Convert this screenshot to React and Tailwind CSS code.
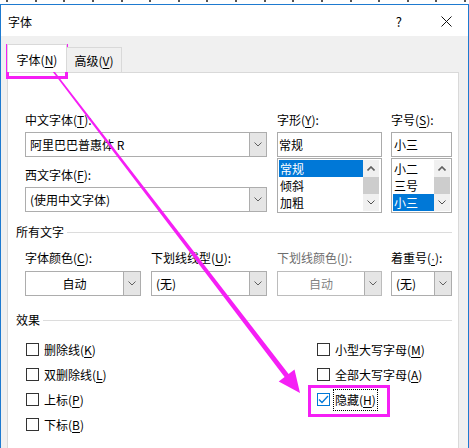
import React from "react";

const FONT = { fontFamily: '"Noto Sans CJK SC", "Noto Sans", sans-serif' };
const PINK = "#f51ff5";

function Key({ children }) {
  return <span className="underline underline-offset-2">{children}</span>;
}

function Chevron({ up = false, color = "#606060" }) {
  return (
    <svg width="8" height="5" viewBox="0 0 8 5">
      <path
        d={up ? "M0.5 4.5 L4 1 L7.5 4.5" : "M0.5 0.5 L4 4 L7.5 0.5"}
        fill="none"
        stroke={color}
        strokeWidth={up ? 1.6 : 1}
      />
    </svg>
  );
}

function Label({ children, disabled }) {
  return (
    <div
      className={`h-[16px] text-[12px] leading-[16px] ${
        disabled ? "text-[#6d6d6d]" : "text-black"
      }`}
    >
      {children}
    </div>
  );
}

function Combo({ value, width, center, disabled }) {
  return (
    <div
      className={`flex h-[25px] border bg-white ${
        disabled ? "border-[#bcbcbc]" : "border-[#adadad]"
      }`}
      style={{ width }}
    >
      <div
        className={`flex flex-1 items-center text-[12px] ${
          center ? "justify-center" : "pl-[4px]"
        } ${disabled ? "text-[#838383]" : "text-black"}`}
      >
        {value}
      </div>
      <div className="flex w-[17px] items-center justify-center border-l border-[#adadad] bg-[#e5e5e5]">
        <Chevron />
      </div>
    </div>
  );
}

function ListBox({ items, selected, width, itemWidth }) {
  return (
    <div
      className="flex h-[55px] border border-[#ababab] bg-white p-px"
      style={{ width }}
    >
      <div className="flex flex-col" style={{ width: itemWidth }}>
        {items.map((it, i) => (
          <div
            key={it}
            className={`h-[17px] pl-[1px] text-[12px] leading-[17px] ${
              i === selected ? "bg-[#0078d7] text-white" : "text-black"
            }`}
          >
            {it}
          </div>
        ))}
      </div>
      <div className="flex w-[16px] flex-col bg-[#f0f0f0]">
        <div className="flex h-[17px] items-center justify-center">
          <Chevron up />
        </div>
        <div className="h-[17px] bg-[#cdcdcd]" />
        <div className="flex h-[17px] items-center justify-center">
          <Chevron up={false} color="#505050" />
        </div>
      </div>
    </div>
  );
}

function GroupHeading({ text }) {
  return (
    <div className="flex h-[16px] items-center gap-[3px]">
      <span className="text-[12px] leading-[16px] text-black">{text}</span>
      <div className="h-px flex-1 bg-[#dcdcdc]" />
    </div>
  );
}

function Check({ label, checked }) {
  return (
    <div className="flex h-[25px] items-center gap-[4px]">
      <div
        className={`flex h-[13px] w-[13px] items-center justify-center border bg-white ${
          checked ? "border-[#0078d7]" : "border-[#333333]"
        }`}
      >
        {checked && (
          <svg width="11" height="9" viewBox="0 0 11 9">
            <path d="M1 4.5 L4 7.5 L10 1" fill="none" stroke="#0078d7" strokeWidth="1.3" />
          </svg>
        )}
      </div>
      <span
        className={`px-[1px] text-[12px] leading-[20px] text-black ${
          checked ? "outline outline-1 outline-dotted outline-black" : ""
        }`}
      >
        {label}
      </span>
    </div>
  );
}

export default function App() {
  const ticks = Array.from({ length: 17 });
  return (
    <div className="relative h-[448px] w-[469px] overflow-hidden bg-white" style={FONT}>
      {/* strip of the document behind */}
      <div className="flex h-[4px] justify-between pl-[6px] pr-[3px]">
        {ticks.map((_, i) => (
          <div key={i} className="mt-0 h-[2px] w-[2px] bg-[#555]" />
        ))}
      </div>

      <div className="flex h-[444px] flex-col border-x border-t border-[#1e7ad0]">
        {/* title bar */}
        <div className="flex h-[31px] items-center bg-white pl-[7px] pr-[16px] pt-[2px] text-[12px] text-black">
          <span>字体</span>
          <span className="ml-auto mr-[39px] text-[13px]">?</span>
          <svg width="11" height="11" viewBox="0 0 11 11">
            <path d="M0.5 0.5 L10.5 10.5 M10.5 0.5 L0.5 10.5" stroke="#111" strokeWidth="1" />
          </svg>
        </div>

        <div className="flex flex-1 flex-col bg-[#f0f0f0] pt-[8px]">
          {/* tabs */}
          <div className="relative z-10 flex h-[28px] items-end pl-[6px]">
            <div className="flex h-[28px] w-[60px] items-center justify-center border-x border-t border-[#d9d9d9] bg-white pt-[2px] text-[12px] text-black">
              字体(<Key>N</Key>)
            </div>
            <div className="-ml-px flex h-[25px] w-[56px] items-center justify-center border-x border-t border-[#d9d9d9] bg-[#f0f0f0] pt-[1px] text-[12px] text-black">
              高级(<Key>V</Key>)
            </div>
          </div>

          {/* panel */}
          <div className="ml-[6px] flex w-[452px] flex-1 flex-col border border-b-0 border-[#d9d9d9] bg-white pl-[8px] pr-[6px] pt-[39px]">
            <div className="ml-[9px] flex gap-[10px]">
              <div className="flex w-[242px] flex-col">
                <Label>中文字体(<Key>T</Key>):</Label>
                <div className="mt-[4px]">
                  <Combo value="阿里巴巴普惠体 R" width={242} />
                </div>
                <div className="mt-[10px]">
                  <Label>西文字体(<Key>F</Key>):</Label>
                </div>
                <div className="mt-[4px]">
                  <Combo value="(使用中文字体)" width={242} />
                </div>
              </div>
              <div className="flex w-[105px] flex-col">
                <Label>字形(<Key>Y</Key>):</Label>
                <div className="mt-[4px] flex h-[25px] items-center border border-[#ababab] bg-white pl-[1px] text-[12px]">
                  常规
                </div>
                <div className="mt-px">
                  <ListBox items={["常规", "倾斜", "加粗"]} selected={0} width={105} itemWidth={84} />
                </div>
              </div>
              <div className="-ml-px flex w-[61px] flex-col">
                <Label>字号(<Key>S</Key>):</Label>
                <div className="mt-[4px] flex h-[25px] items-center border border-[#ababab] bg-white pl-[2px] text-[12px]">
                  小三
                </div>
                <div className="mt-px">
                  <ListBox items={["小二", "三号", "小三"]} selected={2} width={61} itemWidth={41} />
                </div>
              </div>
            </div>

            <div className="mt-[11px]">
              <GroupHeading text="所有文字" />
            </div>

            <div className="ml-[9px] mt-[10px] flex gap-[10px]">
              <div className="flex flex-col gap-[5px]">
                <Label>字体颜色(<Key>C</Key>):</Label>
                <Combo value="自动" width={116} center />
              </div>
              <div className="flex flex-col gap-[5px]">
                <Label>下划线线型(<Key>U</Key>):</Label>
                <Combo value="(无)" width={116} />
              </div>
              <div className="flex flex-col gap-[5px]">
                <Label disabled>下划线颜色(<Key>I</Key>):</Label>
                <Combo value="自动" width={105} center disabled />
              </div>
              <div className="-ml-px flex flex-col gap-[5px]">
                <Label>
                  着重号(
                  <span className="underline underline-offset-2" style={{ fontFamily: '"Liberation Sans", sans-serif' }}>
                    ·
                  </span>
                  ):
                </Label>
                <Combo value="(无)" width={61} />
              </div>
            </div>

            <div className="mt-[16px]">
              <GroupHeading text="效果" />
            </div>

            <div className="ml-[10px] mt-[9px] grid grid-cols-[291px_1fr]">
              <div className="flex flex-col">
                <Check label={<>删除线(<Key>K</Key>)</>} />
                <Check label={<>双删除线(<Key>L</Key>)</>} />
                <Check label={<>上标(<Key>P</Key>)</>} />
                <Check label={<>下标(<Key>B</Key>)</>} />
              </div>
              <div className="flex flex-col">
                <Check label={<>小型大写字母(<Key>M</Key>)</>} />
                <Check label={<>全部大写字母(<Key>A</Key>)</>} />
                <Check label={<>隐藏(<Key>H</Key>)</>} checked />
              </div>
            </div>
          </div>
        </div>
      </div>

      {/* annotations */}
      <div
        className="pointer-events-none absolute left-[6px] top-[44px] h-[35px] w-[62px] border-[3px]"
        style={{ borderColor: PINK }}
      />
      <div
        className="pointer-events-none absolute left-[308px] top-[385px] h-[32px] w-[82px] border-[3px]"
        style={{ borderColor: PINK }}
      />
      <svg className="pointer-events-none absolute left-0 top-0" width="469" height="448">
        <polygon
          points="47.6,62.6 288.6,374 294.5,369.4 300,393 278.7,381.6 284.6,377 46.4,63.4"
          fill={PINK}
        />
      </svg>
    </div>
  );
}
